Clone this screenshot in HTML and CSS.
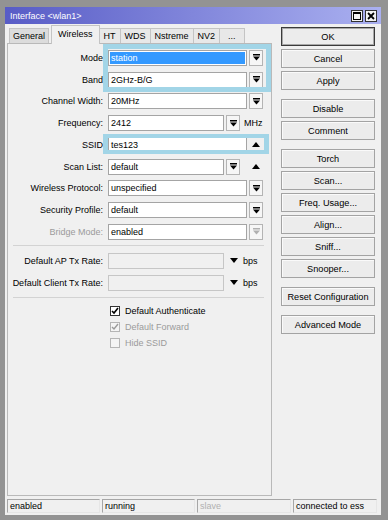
FILE: index.html
```html
<!DOCTYPE html>
<html lang="en">
<head>
  <meta charset="UTF-8" />
  <title>Interface &lt;wlan1&gt;</title>
  <link rel="stylesheet" href="styles.css">
</head>
<body>
  <div class="window">
    <div class="titlebar">
      <span class="title">Interface &lt;wlan1&gt;</span>
      <div class="winbtns">
        <span class="winbtn"><svg width="8" height="8" viewBox="0 0 8 8"><rect x="0.5" y="0.5" width="7" height="7" fill="none" stroke="#000"/><rect x="0" y="0" width="8" height="2"/></svg></span>
        <span class="winbtn"><svg width="8" height="8" viewBox="0 0 8 8"><path d="M1 1L7 7M7 1L1 7" stroke="#000" stroke-width="1.8"/></svg></span>
      </div>
    </div>

    <div class="main">
      <div class="left">
        <div class="tabs">
          <span class="tab tab-dim">General</span>
          <span class="tab active">Wireless</span>
          <span class="tab">HT</span>
          <span class="tab">WDS</span>
          <span class="tab">Nstreme</span>
          <span class="tab">NV2</span>
          <span class="tab tab-more">...</span>
        </div>

        <div class="panel">
          <div class="hl hl-mode"></div>
          <div class="hl hl-ssid"></div>

          <div class="row">
            <span class="lbl">Mode</span>
            <div class="field">
              <div class="input sel"><span>station</span></div>
              <span class="dd"><svg width="7" height="7" viewBox="0 0 7 7"><rect width="7" height="1.5"/><path d="M0 2.5h7L3.5 6.5z"/></svg></span>
            </div>
          </div>
          <div class="row">
            <span class="lbl">Band</span>
            <div class="field">
              <div class="input">2GHz-B/G</div>
              <span class="dd"><svg width="7" height="7" viewBox="0 0 7 7"><rect width="7" height="1.5"/><path d="M0 2.5h7L3.5 6.5z"/></svg></span>
            </div>
          </div>
          <div class="row">
            <span class="lbl">Channel Width:</span>
            <div class="field">
              <div class="input">20MHz</div>
              <span class="dd"><svg width="7" height="7" viewBox="0 0 7 7"><rect width="7" height="1.5"/><path d="M0 2.5h7L3.5 6.5z"/></svg></span>
            </div>
          </div>
          <div class="row">
            <span class="lbl">Frequency:</span>
            <div class="field">
              <div class="input short">2412</div>
              <span class="dd"><svg width="7" height="7" viewBox="0 0 7 7"><rect width="7" height="1.5"/><path d="M0 2.5h7L3.5 6.5z"/></svg></span>
              <span class="unit">MHz</span>
            </div>
          </div>
          <div class="row">
            <span class="lbl">SSID</span>
            <div class="field">
              <div class="input">tes123</div>
              <span class="up"><svg width="8" height="5" viewBox="0 0 8 5"><path d="M0 5h8L4 0z"/></svg></span>
            </div>
          </div>
          <div class="row">
            <span class="lbl">Scan List:</span>
            <div class="field">
              <div class="input short">default</div>
              <span class="dd"><svg width="7" height="7" viewBox="0 0 7 7"><rect width="7" height="1.5"/><path d="M0 2.5h7L3.5 6.5z"/></svg></span>
              <span class="up up-far"><svg width="8" height="5" viewBox="0 0 8 5"><path d="M0 5h8L4 0z"/></svg></span>
            </div>
          </div>
          <div class="row">
            <span class="lbl">Wireless Protocol:</span>
            <div class="field">
              <div class="input">unspecified</div>
              <span class="dd"><svg width="7" height="7" viewBox="0 0 7 7"><rect width="7" height="1.5"/><path d="M0 2.5h7L3.5 6.5z"/></svg></span>
            </div>
          </div>
          <div class="row">
            <span class="lbl">Security Profile:</span>
            <div class="field">
              <div class="input">default</div>
              <span class="dd"><svg width="7" height="7" viewBox="0 0 7 7"><rect width="7" height="1.5"/><path d="M0 2.5h7L3.5 6.5z"/></svg></span>
            </div>
          </div>
          <div class="row">
            <span class="lbl disabled">Bridge Mode:</span>
            <div class="field">
              <div class="input">enabled</div>
              <span class="dd dd-off"><svg width="7" height="7" viewBox="0 0 7 7"><rect width="7" height="1.5"/><path d="M0 2.5h7L3.5 6.5z"/></svg></span>
            </div>
          </div>

          <div class="sep"></div>

          <div class="row">
            <span class="lbl">Default AP Tx Rate:</span>
            <div class="field">
              <div class="input short rate"></div>
              <span class="down"><svg width="8" height="5" viewBox="0 0 8 5"><path d="M0 0h8L4 5z"/></svg></span>
              <span class="unit bps">bps</span>
            </div>
          </div>
          <div class="row">
            <span class="lbl">Default Client Tx Rate:</span>
            <div class="field">
              <div class="input short rate"></div>
              <span class="down"><svg width="8" height="5" viewBox="0 0 8 5"><path d="M0 0h8L4 5z"/></svg></span>
              <span class="unit bps">bps</span>
            </div>
          </div>

          <div class="sep sep-2"></div>

          <div class="row check-row">
            <span></span>
            <div class="field">
              <span class="cb"><svg width="8" height="8" viewBox="0 0 8 8"><path d="M1 4l2 2 4-5" fill="none" stroke="#000" stroke-width="1.6"/></svg></span>
              <span>Default Authenticate</span>
            </div>
          </div>
          <div class="row check-row">
            <span></span>
            <div class="field disabled">
              <span class="cb cb-off"><svg width="8" height="8" viewBox="0 0 8 8"><path d="M1 4l2 2 4-5" fill="none" stroke="#9a9a9a" stroke-width="1.4"/></svg></span>
              <span>Default Forward</span>
            </div>
          </div>
          <div class="row check-row">
            <span></span>
            <div class="field disabled">
              <span class="cb cb-off"></span>
              <span>Hide SSID</span>
            </div>
          </div>
        </div>
      </div>

      <div class="actions">
        <button class="btn btn-default">OK</button>
        <button class="btn">Cancel</button>
        <button class="btn">Apply</button>
        <button class="btn group">Disable</button>
        <button class="btn">Comment</button>
        <button class="btn group">Torch</button>
        <button class="btn">Scan...</button>
        <button class="btn">Freq. Usage...</button>
        <button class="btn">Align...</button>
        <button class="btn">Sniff...</button>
        <button class="btn">Snooper...</button>
        <button class="btn group">Reset Configuration</button>
        <button class="btn group">Advanced Mode</button>
      </div>
    </div>

    <div class="status">
      <span class="cell">enabled</span>
      <span class="cell">running</span>
      <span class="cell muted">slave</span>
      <span class="cell last">connected to ess</span>
    </div>
  </div>
</body>
</html>
```

FILE: styles.css
```css
body {
  margin: 0;
  font-family: 'Liberation Sans', Arial, sans-serif;
  font-size: 9px;
  color: #000;
}
.window {
  width: 388px;
  height: 520px;
  box-sizing: border-box;
  border-style: solid;
  border-width: 7px 7px 5px 5px;
  border-color: #939393;
  background: #f0f0f0;
  display: flex;
  flex-direction: column;
}
.titlebar {
  height: 17px;
  flex: none;
  display: flex;
  align-items: center;
  justify-content: space-between;
  padding: 0 4px 0 5px;
  background: linear-gradient(to right, #585cc6, #aab0f0);
  color: #fff;
}
.winbtns {
  display: flex;
  gap: 2px;
}
.winbtn {
  width: 12px;
  height: 12px;
  box-sizing: border-box;
  border: 1px solid #333;
  background: #f3f3f3;
  display: flex;
  align-items: center;
  justify-content: center;
}
.main {
  height: 472px;
  flex: none;
  display: flex;
  gap: 9px;
  padding: 1px 6px 0 2px;
  box-sizing: border-box;
}
.left {
  width: 265px;
  display: flex;
  flex-direction: column;
}
.tabs {
  height: 18px;
  flex: none;
  display: flex;
  align-items: flex-end;
  padding-left: 2px;
}
.tab {
  height: 15px;
  line-height: 14px;
  box-sizing: border-box;
  padding: 0 4px;
  border: 1px solid #c4c4c4;
  border-bottom: none;
  background: #e8e8e8;
  margin-right: -1px;
}
.tab-dim {
  background: #dcdcdc;
  padding: 0 3px;
  margin-right: 2px;
}
.tab-more {
  padding: 0 8px;
}
.tab.active {
  height: 19px;
  line-height: 17px;
  padding: 0 6px;
  background: #f0f0f0;
  margin-bottom: -1px;
  position: relative;
  z-index: 2;
}
.panel {
  flex: 1;
  position: relative;
  box-sizing: border-box;
  border: 1px solid #b9b9b9;
  padding-top: 3px;
}
.hl {
  position: absolute;
  box-sizing: border-box;
  border: 5px solid #a2d5e7;
  pointer-events: none;
  z-index: 1;
}
.hl-mode {
  left: 95px;
  top: 0;
  width: 168px;
  height: 48px;
}
.hl-ssid {
  left: 95px;
  top: 90px;
  width: 166px;
  height: 20px;
  border-width: 4px 5px;
}
.row {
  display: grid;
  grid-template-columns: 95px auto;
  column-gap: 5px;
  height: 21.75px;
  align-items: center;
}
.lbl {
  text-align: right;
  white-space: nowrap;
}
.disabled {
  color: #9b9b9b;
}
.field {
  display: flex;
  align-items: center;
}
.input {
  width: 139px;
  height: 16px;
  box-sizing: border-box;
  border: 1px solid #a4a4a4;
  background: #fff;
  padding-left: 2px;
  line-height: 14px;
  white-space: nowrap;
}
.input.sel {
  padding: 1px;
}
.input.sel span {
  display: block;
  height: 12px;
  line-height: 12px;
  padding-left: 1px;
  background: #3399ff;
  color: #fff;
}
.short {
  width: 116px;
}
.rate {
  background: #f0f0f0;
  border-color: #c6c6c6;
}
.dd {
  width: 14px;
  height: 16px;
  box-sizing: border-box;
  margin-left: 2px;
  border: 1px solid #b4b4b4;
  background: #f6f6f6;
  display: flex;
  align-items: center;
  justify-content: center;
}
.dd-off svg {
  fill: #b0b0b0;
}
.up {
  width: 14px;
  margin-left: 2px;
  display: flex;
  justify-content: center;
}
.up-far {
  margin-left: 9px;
}
.down {
  margin-left: 6px;
  display: flex;
}
.unit {
  margin-left: 4px;
}
.bps {
  margin-left: 5px;
}
.sep {
  border-top: 1px solid #d3d3d3;
  margin: 2.25px 7px 4px 5px;
}
.sep-2 {
  margin-top: 3.5px;
  margin-bottom: 5px;
}
.check-row {
  height: 16px;
}
.cb {
  width: 10px;
  height: 10px;
  box-sizing: border-box;
  border: 1px solid #333;
  background: #fff;
  margin: 0 5px 0 2px;
  display: flex;
  align-items: center;
  justify-content: center;
}
.cb-off {
  border-color: #b5b5b5;
  background: #f4f4f4;
}
.actions {
  width: 94px;
  display: flex;
  flex-direction: column;
  gap: 3px;
  padding-top: 2px;
}
.btn {
  height: 19px;
  padding: 0;
  font: inherit;
  font-size: 9.2px;
  color: #000;
  border: 1px solid #a3a3a3;
  background: #ececec;
  box-shadow: inset 1px 1px #fafafa;
}
.btn-default {
  border-color: #3a3a3a;
  box-shadow: inset 0 0 0 1px #a8a8a8;
}
.group {
  margin-top: 6px;
}
.status {
  height: 14px;
  flex: none;
  display: flex;
  gap: 2px;
  margin: 3px 4px 2px 2px;
}
.cell {
  width: 93px;
  box-sizing: border-box;
  border: 1px solid;
  border-color: #a6a6a6 #e6e6e6 #e6e6e6 #a6a6a6;
  padding-left: 2px;
  line-height: 12px;
  white-space: nowrap;
}
.cell.muted {
  width: 94px;
  color: #b0b0b0;
}
.cell.last {
  flex: 1;
}
```
